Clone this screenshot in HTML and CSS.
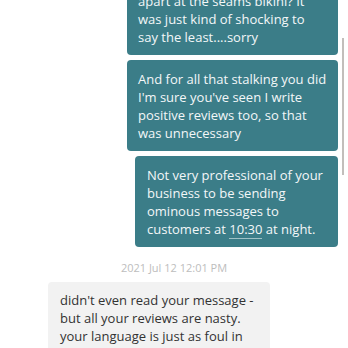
FILE: index.html
```html
<!DOCTYPE html>
<html lang="en">
<head>
    <meta charset="UTF-8">
    <meta name="viewport" content="width=device-width, initial-scale=1.0">
    <title>Messages</title>
    <link rel="stylesheet" href="styles.css">
</head>
<body>

<div class="ventana">
    <div class="hilo">
        <div class="mensaje enviado">Was I wearing that falling<br>apart at the seams bikini? It was just kind of shocking to say the least....sorry</div>
        <div class="mensaje enviado">And for all that stalking you did I'm sure you've seen I write positive reviews too, so that was unnecessary</div>
        <div class="mensaje enviado estrecho">Not very professional of your business to be sending ominous messages to customers at <span class="hora">10:30</span> at night.</div>

        <div class="fecha">2021 Jul 12 12:01 PM</div>

        <div class="mensaje recibido">didn't even read your message - but all your reviews are nasty. your language is just as foul in person as it is online</div>
    </div>

    <!-- barra de desplazamiento -->
    <div class="barra"></div>
</div>

</body>
</html>
```

FILE: styles.css
```css
/* Estilos para la conversacion */
body {
    margin: 0;
    background-color: #ffffff;
    font-family: "Open Sans", Arial, sans-serif;
    overflow: hidden;
}

.ventana {
    position: relative;
    width: 348px;
    height: 348px;
    overflow: hidden;
}

.hilo {
    display: flex;
    flex-direction: column;
    gap: 5px;
    margin-top: -36px;
    padding: 0 10px 0 48px;
}

.mensaje {
    font-size: 13px;
    line-height: 18px;
    border-radius: 4px;
    box-sizing: border-box;
}

.enviado {
    align-self: flex-end;
    width: 211px;
    padding: 10px 11px 9px 11px;
    background-color: #3b7d88;
    color: #f3f7f8;
}

.estrecho {
    width: 203px;
    padding-left: 12px;
}

.hora {
    border-bottom: 1px solid #9fc2c7;
}

.fecha {
    text-align: center;
    font-size: 11px;
    line-height: 15px;
    color: #bdbdbd;
    margin: 8px -10px 2px -48px;
}

.recibido {
    align-self: flex-start;
    width: 222px;
    padding: 9px 12px;
    background-color: #f2f2f2;
    color: #333333;
}

.barra {
    position: absolute;
    top: 38px;
    right: 4px;
    width: 2px;
    height: 137px;
    background-color: #c2bebb;
}
```
